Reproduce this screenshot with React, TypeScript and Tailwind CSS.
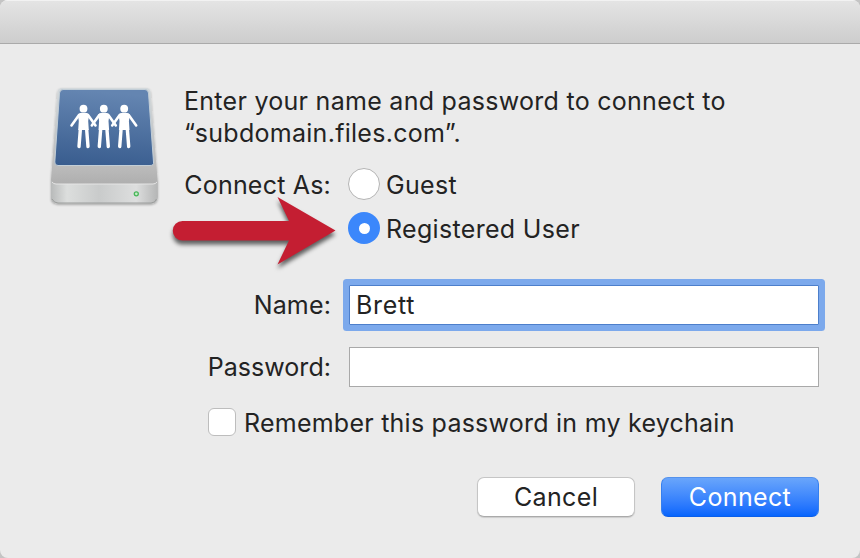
import type { ReactNode } from "react";

export default function App() {
  return (
    <div className="relative h-[558px] w-[860px] overflow-hidden bg-[#c4c4c4] font-['Inter',sans-serif] text-[25px] leading-8 tracking-[0.16px] text-[#232323]">
      <div className="flex h-full flex-col overflow-hidden rounded-[8px] bg-[#ebebeb]">
        <header className="h-11 shrink-0 border-t border-b border-t-[#f2f2f2] border-b-[#aaaaaa] bg-linear-to-b from-[#e4e4e4] to-[#cdcdcd]" />
        <main className="flex pt-[41px] pr-[41px] pl-[46px]">
          <ServerIcon />
          <div className="ml-2 flex-1">
            <p className="tracking-[0.28px] whitespace-nowrap">
              Enter your name and password to connect to
              <br />
              “subdomain.files.com”.
            </p>
            <div className="mt-[19px] flex h-8 items-center">
              <Label>
                <span className="pt-0.5 tracking-[0.2px]">Connect As:</span>
              </Label>
              <Radio />
              <span className="ml-1.5 pt-0.5 tracking-[0.3px]">Guest</span>
            </div>
            <div className="mt-3 flex h-8 items-center">
              <Label />
              <Radio checked />
              <span className="ml-1.5 pt-0.5 tracking-[0.32px] whitespace-nowrap">Registered User</span>
            </div>
            <div className="mt-[41px] flex h-10 items-center">
              <Label>Name:</Label>
              <input
                aria-label="Name"
                defaultValue="Brett"
                className="ml-[18px] h-10 w-[470px] rounded-[1px] border border-[#4d7fcb] bg-white px-1.5 tracking-[0.7px] outline-none ring-6 ring-[#7ca9ec]"
              />
            </div>
            <div className="mt-[22px] flex h-10 items-center">
              <Label>
                <span className="tracking-[0.05px]">Password:</span>
              </Label>
              <input
                aria-label="Password"
                type="password"
                className="ml-[18px] h-10 w-[470px] border border-[#a9a9a9] bg-white px-1.5 outline-none"
              />
            </div>
            <div className="mt-5 ml-6 flex h-8 items-start">
              <span className="mt-px size-7 rounded-md border border-[#bdbdbd] bg-white" />
              <span className="ml-2 tracking-[0.24px] whitespace-nowrap">Remember this password in my keychain</span>
            </div>
            <div className="mt-[38px] flex justify-end gap-[26px] tracking-[0.35px]">
              <button className="h-10 w-[158px] rounded-[7px] border border-[#c5c5c5] border-b-[#aaaaaa] bg-white shadow-[0_1px_1px_#0002]">
                Cancel
              </button>
              <button className="h-10 w-[158px] rounded-[7px] border border-x-[#357fee] border-t-[#5592ec] border-b-[#0a5eea] bg-linear-to-b from-[#69a5fb] to-[#0565fd] text-white">
                Connect
              </button>
            </div>
          </div>
        </main>
      </div>
      <Arrow />
    </div>
  );
}

function Label({ children }: { children?: ReactNode }) {
  return <span className="flex w-[147px] shrink-0 justify-end whitespace-nowrap">{children}</span>;
}

function Radio({ checked }: { checked?: boolean }) {
  return (
    <span
      className={`ml-[17px] flex size-8 items-center justify-center rounded-full ${checked ? "bg-[#3b87fb]" : "border border-[#b4b4b4] bg-white"}`}
    >
      {checked && <span className="size-[11px] rounded-full bg-white" />}
    </span>
  );
}

function ServerIcon() {
  return (
    <svg className="h-[125px] w-[130px] shrink-0" viewBox="46 85 130 125">
      <defs>
        <linearGradient id="screen" x1="0.1" y1="0" x2="0" y2="1">
          <stop offset="0" stopColor="#6485b1" />
          <stop offset="1" stopColor="#385c8e" />
        </linearGradient>
        <linearGradient id="deck" x1="0" y1="0" x2="0" y2="1">
          <stop offset="0" stopColor="#d3d9dc" />
          <stop offset="0.66" stopColor="#bdbdbd" />
          <stop offset="1" stopColor="#a0a0a0" />
        </linearGradient>
        <linearGradient id="front" x1="0" y1="0" x2="1" y2="0">
          <stop offset="0" stopColor="#b8baba" />
          <stop offset="0.15" stopColor="#dcdedd" />
          <stop offset="0.45" stopColor="#c9cbcb" />
          <stop offset="0.8" stopColor="#dddede" />
          <stop offset="1" stopColor="#b5b6b6" />
        </linearGradient>
        <filter id="iconShadow" x="-10%" y="-10%" width="120%" height="120%">
          <feDropShadow dx="0" dy="1" stdDeviation="1" floodOpacity="0.3" />
        </filter>
      </defs>
      <g filter="url(#iconShadow)">
        <path d="M62 88H146Q150 88 150.500 92L157.500 179V197Q157.500 203.500 151 203.500H58Q51 203.500 51 197V180L57.500 92Q58 88 62 88Z" fill="url(#deck)" />
        <path d="M51 180Q53 184 56 184H153Q156 184 157.500 180V197Q157.500 203.500 151 203.500H58Q51 203.500 51 197Z" fill="url(#front)" />
        <path d="M52 199Q54 203 58 203H151Q155 203 156.500 199" fill="none" stroke="#9b9d9c" />
        <path d="M52 182Q53.500 184 56 184H153Q155.500 184 157 182" fill="none" stroke="#e5e5e5" />
      </g>
      <path d="M63 89.500H145Q148 89.500 148.500 93L153.500 162Q154 165.500 150 165.500H58Q54.500 165.500 54.800 162L59.500 93Q60 89.500 63 89.500Z" fill="url(#screen)" stroke="#c2ced7" />
      <Person x={83.500} />
      <Person x={103.800} />
      <Person x={124.200} />
      <circle cx="136.300" cy="193.800" r="2" fill="#c5ecc5" stroke="#48b65a" strokeWidth="1.300" />
    </svg>
  );
}

function Person({ x }: { x: number }) {
  return (
    <g transform={`translate(${x} 0)`} fill="#fff" stroke="#fff" strokeLinecap="round">
      <circle cx="0" cy="108.700" r="3.900" stroke="none" />
      <path d="M-3 113H3Q5.500 113 5.500 116L4.700 121L5.300 130H-5.300L-4.700 121L-5.500 116Q-5.500 113 -3 113Z" stroke="none" />
      <path d="M-4.500 115L-12 125.500M4.500 115L12 125.500" strokeWidth="2.600" />
      <path d="M-3.200 130V130L-4.500 146.500M3.200 130V130L4.500 146.500" strokeWidth="3.400" />
    </g>
  );
}

function Arrow() {
  return (
    <svg className="absolute top-[185px] left-[160px] h-[100px] w-[190px]" viewBox="160 185 190 100">
      <path
        d="M182.500 221H289L277.500 197L335.500 230.500L277.500 264.500L289 240.500H182.500A9.750 9.750 0 0 1 182.500 221Z"
        fill="#c41e32"
        className="drop-shadow-[0_4px_2px_#0009]"
      />
    </svg>
  );
}
